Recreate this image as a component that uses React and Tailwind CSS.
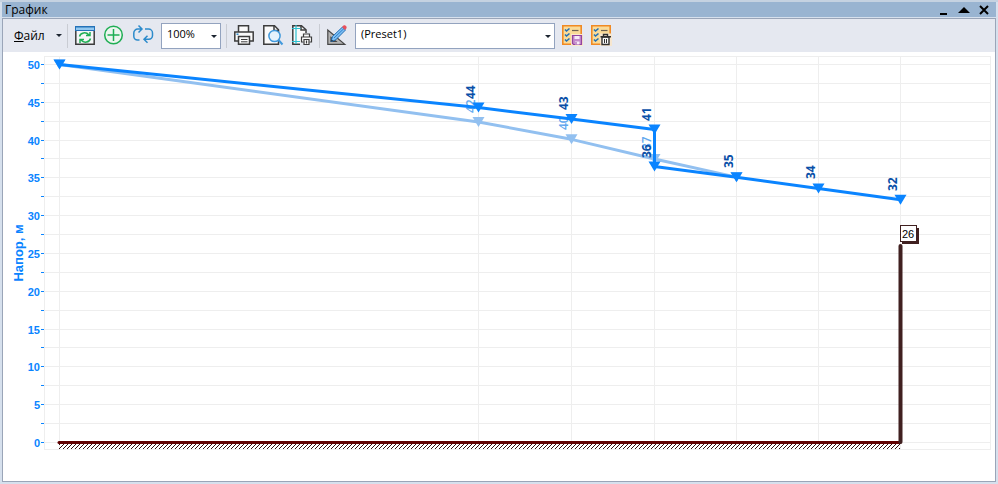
import { useState } from 'react'

const MAX_HEAD = 50
const STEP = 2.5

// pipeline nodes along the route
const nodes = [56.5, 475.5, 568.5, 651.5, 733.5, 815.5, 897.5]

const headSeries = [
  { x: nodes[0], head: 50 },
  { x: nodes[1], head: 44.3, label: '44' },
  { x: nodes[2], head: 42.8, label: '43' },
  { x: nodes[3], head: 41.4, label: '41' },
  { x: nodes[3], head: 36.5, label: '36' },
  { x: nodes[4], head: 35.1, label: '35' },
  { x: nodes[5], head: 33.6, label: '34' },
  { x: nodes[6], head: 32.1, label: '32' },
]

const previousSeries = [
  { x: nodes[0], head: 50 },
  { x: nodes[1], head: 42.4, label: '42' },
  { x: nodes[2], head: 40.1, label: '40' },
  { x: nodes[3], head: 37.5, label: '37' },
  { x: nodes[4], head: 35.1 },
]

const toY = head => 390.5 - head * 7.56
const toRow = head => Math.ceil(toY(head))

function Series({ points, color }) {
  return (
    <g>
      <polyline
        points={points.map(p => `${p.x},${toY(p.head)}`).join(' ')}
        fill="none"
        stroke={color}
        strokeWidth="3"
        strokeLinejoin="round"
      />
      {points.map((p, i) => {
        const y = toY(p.head)
        return <path key={i} d={`M${p.x - 6} ${y - 5}h12l-6 10z`} fill={color} />
      })}
    </g>
  )
}

function SeriesLabels({ points, color, className }) {
  return (
    <g fill={color} className={className}>
      {points.filter(p => p.label).map(p => {
        const x = p.x - 4
        const y = Math.round(toY(p.head)) - 9
        return (
          <text key={p.label} x={x} y={y} transform={`rotate(-90 ${x} ${y})`}>
            {p.label}
          </text>
        )
      })}
    </g>
  )
}

function HeadChart() {
  const rows = []
  for (let v = 0; v <= MAX_HEAD; v += STEP) rows.push(v)

  return (
    <svg viewBox="0 0 992 429" className="block w-full" role="img" aria-label="Напор, м">
      <defs>
        <pattern id="ground" x="56" y="392" width="4" height="5" patternUnits="userSpaceOnUse">
          <g fill="#301010" shapeRendering="crispEdges">
            <rect x="0" y="4" width="1" height="1" />
            <rect x="1" y="3" width="1" height="1" />
            <rect x="2" y="2" width="1" height="1" />
            <rect x="3" y="1" width="1" height="1" />
            <rect x="0" y="0" width="1" height="1" />
          </g>
        </pattern>
      </defs>

      <g stroke="#eeeeee" fill="none" shapeRendering="crispEdges">
        <rect x="41.5" y="4.5" width="946" height="393" />
        {rows.map(v => (
          <line key={v} x1="41" x2="988" y1={toRow(v) - 0.5} y2={toRow(v) - 0.5} />
        ))}
        {nodes.map(x => (
          <line key={x} x1={x} x2={x} y1="4" y2="398" />
        ))}
      </g>

      <g fill="#0a84ff" className="font-['Liberation_Sans',sans-serif] text-[11px] font-bold">
        {rows.map(v => (
          <rect key={v} x="38" y={toRow(v) - 1} width="3" height="1" shapeRendering="crispEdges" />
        ))}
        {rows.filter(v => v % 5 === 0).map(v => (
          <text key={v} x="37" y={toRow(v) + 4} textAnchor="end">{v}</text>
        ))}
        <text x="20" y="201" textAnchor="middle" transform="rotate(-90 20 201)" className="text-[13px]">
          Напор, м
        </text>
      </g>

      <rect x="56" y="392" width="841" height="5" fill="url(#ground)" />
      <line x1="56" x2="897" y1="390.5" y2="390.5" stroke="#600000" strokeWidth="3" strokeLinecap="round" />

      <Series points={previousSeries} color="#92c0f0" />
      <SeriesLabels
        points={previousSeries}
        color="#62a8ee"
        className="font-['Open_Sans',sans-serif] text-[12px] font-semibold"
      />
      <Series points={headSeries} color="#0a84ff" />
      <SeriesLabels
        points={headSeries}
        color="#0a50a8"
        className="font-['Open_Sans',sans-serif] text-[12px] font-bold"
      />

      <line x1="897.5" x2="897.5" y1="194" y2="390" stroke="#402020" strokeWidth="4" strokeLinecap="round" />
      <rect x="899" y="176" width="17" height="16" fill="#402020" />
      <rect x="897.5" y="173.5" width="16" height="16" fill="#ffffff" stroke="#402020" />
      <text x="905" y="186" textAnchor="middle" className="font-['Liberation_Sans',sans-serif] text-[11px]">26</text>
    </svg>
  )
}

function Icon({ children }) {
  return (
    <svg viewBox="0 0 23 23" className="h-[23px] w-[23px]" fill="none" aria-hidden="true">
      {children}
    </svg>
  )
}

function RefreshWindowIcon() {
  return (
    <Icon>
      <path d="M1.800 7v13.300h18.400V7" fill="#f4f6f8" stroke="#3c3c3c" strokeWidth="1.500" />
      <path d="M1 2h20v5H1z" fill="#2472b8" />
      <path d="M2 3.500h18V6H2z" fill="#92c8f0" />
      <g stroke="#1fae54" strokeWidth="1.500">
        <path d="M5.500 12.500c1-4 6.500-5 9.500-1.500M16 8v3.500h-4M16.500 14.500c-1 4-6.500 5-9.500 1.500M6 19v-3.500h4" />
      </g>
    </Icon>
  )
}

function AddIcon() {
  return (
    <Icon>
      <circle cx="10.500" cy="11" r="8.800" stroke="#1fae54" strokeWidth="1.500" fill="#edf5f0" />
      <path d="M10.500 5v12M4.500 11h12" stroke="#1fae54" strokeWidth="1.500" />
    </Icon>
  )
}

function LoopIcon() {
  return (
    <Icon>
      <g stroke="#2d8bcb" strokeWidth="1.500">
        <path d="M7.500 16H5.500a3.700 3.700 0 0 1-3.700-3.700V9a4 4 0 0 1 4-4H10M6.500 1.500 10 5 6.500 8.500" />
        <path d="M13 5h3.500a4 4 0 0 1 4 4v2.500a3.700 3.700 0 0 1-3.700 3.700H12M15.500 11.700 12 15.200l3.500 3.500" />
      </g>
    </Icon>
  )
}

function PrinterIcon() {
  return (
    <Icon>
      <g stroke="#3c3c3c" strokeWidth="1.500">
        <path d="M5.500 8V1.800h10V8" fill="#fafafa" />
        <path d="M5 17H1.800V8h18.400v9H17" fill="#fafafa" />
        <path d="M5.500 12.500h11v7.800h-11z" fill="#fafafa" />
        <path d="M8 15.500h6.500M8 17.800h6.500" strokeWidth="1" />
      </g>
      <path d="M3.500 10.200h2" stroke="#2d8bcb" strokeWidth="1.500" />
    </Icon>
  )
}

function PreviewIcon() {
  return (
    <Icon>
      <path d="M1.800 1.800h10.700l4 4v14.500H1.800z" fill="#fafafa" stroke="#3c3c3c" strokeWidth="1.500" />
      <path d="M12 2v4.500h4.500" stroke="#3c3c3c" strokeWidth="1.500" />
      <circle cx="12.500" cy="12" r="5.600" fill="#e6f2fc" stroke="#4199dc" strokeWidth="1.500" />
      <path d="m16.500 16 4 4.500" stroke="#4199dc" strokeWidth="2" />
    </Icon>
  )
}

function PagePrintIcon() {
  return (
    <Icon>
      <path d="M9 20.300H1.800V1.800h8.700l4.500 4V9" fill="#fafafa" stroke="#3c3c3c" strokeWidth="1.500" />
      <path d="M10 2v4h4.500" stroke="#3c3c3c" strokeWidth="1.500" />
      <path d="M5 1v19M1 4.500h8.500M1 17.500h8" stroke="#2cc0d0" strokeWidth="1.200" />
      <g stroke="#3c3c3c" strokeWidth="1.200" fill="#fafafa">
        <path d="M12.500 13v-3h6v3" />
        <path d="M12.500 18h-2v-5h10v5h-2" />
        <path d="M13 15.500h5v5h-5z" />
        <path d="M15.500 16.500v3" />
      </g>
    </Icon>
  )
}

function DesignIcon() {
  return (
    <Icon>
      <path
        d="M1.800 6v14.300h17zM5 13.500v4h5z"
        fill="#b4b4b4"
        stroke="#454545"
        strokeWidth="1.200"
        fillRule="evenodd"
      />
      <path d="m5 17.500 1.500-5L16.500 3 19.500 6 9.500 16z" fill="#7fc0f4" stroke="#1f6cb5" />
      <path d="m8 14 10-9.500" stroke="#2b7cc8" />
      <path d="m16 3 1.500-1.500c1.500-1 4 1.200 2.800 3L19 6z" fill="#e8505b" />
      <path d="m5 17.500.7-2 1.300 1.300z" fill="#2a2a2a" />
    </Icon>
  )
}

function ChecklistBase() {
  return (
    <>
      <path d="M1.800 1.800h18.400v18.400H1.800z" fill="#fadb98" stroke="#f08a24" strokeWidth="1.600" />
      <path d="m4 5.500 1.500 1.500L8.500 4.500M4 10.500 5.500 12l3-2.500M4 15.500 5.500 17l3-2.500" stroke="#2370b5" strokeWidth="1.600" />
      <path d="M11 6.500h6.500" stroke="#6e6250" strokeWidth="1.200" />
    </>
  )
}

function SavePresetIcon() {
  return (
    <Icon>
      <ChecklistBase />
      <path d="M10 10h12v12H10z" fill="#fbe9cc" />
      <path d="M11.500 11.500h9v9h-8l-1-1z" fill="#c48acb" stroke="#93449f" strokeWidth="1.200" />
      <path d="M13.500 12h5v3h-5zM14 17.500h4.500v3H14z" fill="#f8eaf8" />
      <path d="M15 18v2.500" stroke="#93449f" />
    </Icon>
  )
}

function DeletePresetIcon() {
  return (
    <Icon>
      <ChecklistBase />
      <path d="M9.500 9.500H22V22H10.500z" fill="#f6e6cf" />
      <path d="M12 13h7v7.500h-7z" fill="#fafafa" stroke="#303030" strokeWidth="1.400" />
      <path d="M10.500 12.700h10.500M13.500 12.500v-2h4v2" stroke="#303030" strokeWidth="1.400" />
      <path d="M14.500 15v4M16.500 15v4" stroke="#303030" />
    </Icon>
  )
}

function ToolButton({ label, children }) {
  return (
    <button aria-label={label} className="flex h-[29px] w-[29px] items-center justify-center hover:bg-[#cfdcee]">
      {children}
    </button>
  )
}

function Separator() {
  return <div className="h-6 w-px bg-[#c9ccd3]" />
}

function Arrow({ className }) {
  return (
    <svg viewBox="0 0 6 3" className={`h-[3px] w-[6px] ${className}`} aria-hidden="true">
      <path d="M0 0h6L3 3z" fill="#1c2430" />
    </svg>
  )
}

function Combo({ label, value, onChange, options, className }) {
  return (
    <div className={`relative ${className}`}>
      <select
        aria-label={label}
        value={value}
        onChange={e => onChange(e.target.value)}
        className="block h-[26px] w-full appearance-none border border-[#93a3bf] bg-white pb-1 pl-[5px] text-[11px] leading-5 text-black outline-none"
      >
        {options.map(o => <option key={o}>{o}</option>)}
      </select>
      <Arrow className="pointer-events-none absolute right-1 top-3" />
    </div>
  )
}

export default function App() {
  const [zoom, setZoom] = useState('100%')
  const [preset, setPreset] = useState('(Preset1)')

  return (
    <div className="min-h-screen bg-[#d6e0ed] px-[2px] font-['Open_Sans','Noto_Sans',sans-serif] text-[12px] text-black">
      <div className="-mx-[2px] h-[2px] bg-[#c5d2e1]" />
      <header className="flex h-[15px] items-center bg-[#99b4d1] pl-[3px] pr-[6px]">
        <h1 className="grow leading-4">График</h1>
        <div className="flex items-center gap-[8px]">
          <button aria-label="Свернуть" className="flex h-3 w-3 items-center justify-center">
            <svg viewBox="0 0 12 12" className="h-3 w-3"><path d="M2 9h7v2H2z" /></svg>
          </button>
          <button aria-label="Развернуть" className="flex h-3 w-3 items-center justify-center">
            <svg viewBox="0 0 12 12" className="h-3 w-3"><path d="M6 3l6 6H0z" /></svg>
          </button>
          <button aria-label="Закрыть" className="flex h-3 w-3 items-center justify-center">
            <svg viewBox="0 0 12 12" className="h-3 w-3"><path d="m2 2 8 8M10 2l-8 8" stroke="#000" strokeWidth="2" /></svg>
          </button>
        </div>
      </header>

      <main className="mt-px border border-[#9aa5b8] bg-white">
        <div className="flex h-[33px] items-center bg-[#e5e8f0]">
          <button className="flex w-[64px] items-center justify-between pl-[11px] pr-[5px] leading-5">
            <span><u>Ф</u>айл</span>
            <Arrow className="" />
          </button>
          <Separator />
          <div className="ml-[3px] flex">
            <ToolButton label="Обновить"><RefreshWindowIcon /></ToolButton>
            <ToolButton label="Добавить"><AddIcon /></ToolButton>
            <ToolButton label="Повторить"><LoopIcon /></ToolButton>
          </div>
          <Combo
            label="Масштаб"
            value={zoom}
            onChange={setZoom}
            options={['50%', '100%', '200%']}
            className="ml-[3px] mr-[5px] w-[60px]"
          />
          <Separator />
          <div className="ml-[3px] mr-[2px] flex">
            <ToolButton label="Печать"><PrinterIcon /></ToolButton>
            <ToolButton label="Просмотр"><PreviewIcon /></ToolButton>
            <ToolButton label="Параметры страницы"><PagePrintIcon /></ToolButton>
          </div>
          <Separator />
          <div className="ml-[3px] mr-[3px] flex">
            <ToolButton label="Настройка"><DesignIcon /></ToolButton>
          </div>
          <Combo
            label="Набор настроек"
            value={preset}
            onChange={setPreset}
            options={['(Preset1)']}
            className="mr-[3px] w-[200px]"
          />
          <ToolButton label="Сохранить набор"><SavePresetIcon /></ToolButton>
          <ToolButton label="Удалить набор"><DeletePresetIcon /></ToolButton>
        </div>
        <HeadChart />
      </main>
    </div>
  )
}
